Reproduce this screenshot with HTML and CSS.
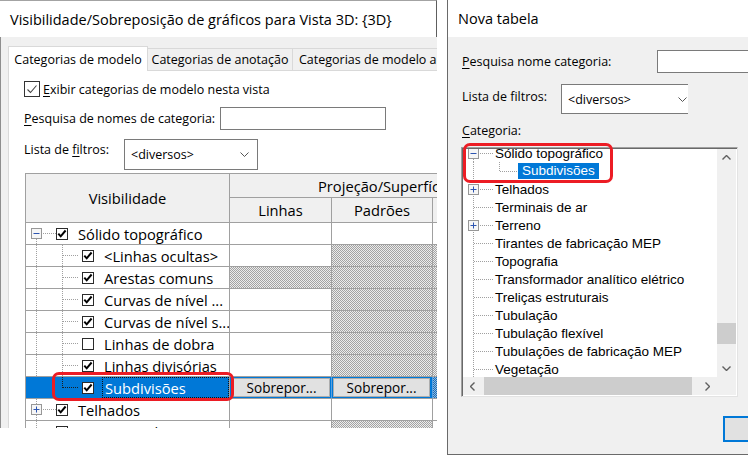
FILE: index.html
```html
<!DOCTYPE html>
<html lang="pt">
<head>
<meta charset="utf-8">
<title>Visibilidade</title>
<link rel="stylesheet" href="styles.css">
</head>
<body>
<div class="screen">
  <section class="dlg-l">
    <div class="tbar tbar-l">Visibilidade/Sobreposição de gráficos para Vista 3D: {3D}</div>
    <div class="lbody">
      <div class="tabs">
        <div class="tab tab-on">Categorias de modelo</div>
        <div class="tab tab-2">Categorias de anotação</div>
        <div class="tab tab-3">Categorias de modelo analítico</div>
      </div>
      <div class="panel">
        <div class="cbrow">
          <svg class="cb16" viewBox="0 0 16 16"><rect x=".5" y=".5" width="15" height="15"/><path d="M3.5 8.5l3 3 6-7"/></svg>
          <span><u>E</u>xibir categorias de modelo nesta vista</span>
        </div>
        <div class="frow frow-search">
          <span class="lbl lbl-search"><u>P</u>esquisa de nomes de categoria:</span>
          <span class="inp inp-l"></span>
        </div>
        <div class="frow frow-filt">
          <span class="lbl lbl-filt">Lista de <u>fi</u>ltros:</span>
          <span class="sel sel-l"><span>&lt;diversos&gt;</span><svg class="chev" viewBox="0 0 9 5"><path d="M.5.5l4 4 4-4"/></svg></span>
        </div>
        <div class="vg">
          <div class="hc hc-vis">Visibilidade</div>
          <div class="hc hc-proj">Projeção/Superfície</div>
          <div class="hc">Linhas</div>
          <div class="hc">Padrões</div>
          <div class="hc"></div>

          <div class="c tc"><span class="g g-rf"><svg class="ex" viewBox="0 0 11 11"><rect x=".5" y=".5" width="10" height="10"/><path d="M2.5 5.5h6"/></svg></span><svg class="cb" viewBox="0 0 12 12"><rect x=".5" y=".5" width="11" height="11"/><path d="M2.3 5.6l2.4 2.7 4.9-5.8"/></svg><span class="tt">Sólido topográfico</span></div>
          <div class="c"></div><div class="c"></div><div class="c"></div>

          <div class="c tc"><span class="g g-ch"></span><svg class="cb" viewBox="0 0 12 12"><rect x=".5" y=".5" width="11" height="11"/><path d="M2.3 5.6l2.4 2.7 4.9-5.8"/></svg><span class="tt">&lt;Linhas ocultas&gt;</span></div>
          <div class="c"></div><div class="c h"></div><div class="c h"></div>

          <div class="c tc"><span class="g g-ch"></span><svg class="cb" viewBox="0 0 12 12"><rect x=".5" y=".5" width="11" height="11"/><path d="M2.3 5.6l2.4 2.7 4.9-5.8"/></svg><span class="tt">Arestas comuns</span></div>
          <div class="c h"></div><div class="c h"></div><div class="c h"></div>

          <div class="c tc"><span class="g g-ch"></span><svg class="cb" viewBox="0 0 12 12"><rect x=".5" y=".5" width="11" height="11"/><path d="M2.3 5.6l2.4 2.7 4.9-5.8"/></svg><span class="tt">Curvas de nível ...</span></div>
          <div class="c"></div><div class="c h"></div><div class="c h"></div>

          <div class="c tc"><span class="g g-ch"></span><svg class="cb" viewBox="0 0 12 12"><rect x=".5" y=".5" width="11" height="11"/><path d="M2.3 5.6l2.4 2.7 4.9-5.8"/></svg><span class="tt">Curvas de nível s...</span></div>
          <div class="c"></div><div class="c h"></div><div class="c h"></div>

          <div class="c tc"><span class="g g-ch"></span><svg class="cb" viewBox="0 0 12 12"><rect x=".5" y=".5" width="11" height="11"/></svg><span class="tt">Linhas de dobra</span></div>
          <div class="c"></div><div class="c h"></div><div class="c h"></div>

          <div class="c tc"><span class="g g-ch"></span><svg class="cb" viewBox="0 0 12 12"><rect x=".5" y=".5" width="11" height="11"/><path d="M2.3 5.6l2.4 2.7 4.9-5.8"/></svg><span class="tt">Linhas divisórias</span></div>
          <div class="c"></div><div class="c h"></div><div class="c h"></div>

          <div class="c tc sel-row"><span class="g g-chl"></span><svg class="cb" viewBox="0 0 12 12"><rect x=".5" y=".5" width="11" height="11"/><path d="M2.3 5.6l2.4 2.7 4.9-5.8"/></svg><span class="focus">Subdivisões</span></div>
          <div class="c sel-row bc bc1"><span class="btn">Sobrepor...</span></div>
          <div class="c sel-row bc bc2"><span class="btn">Sobrepor...</span></div>
          <div class="c hb"></div>

          <div class="c tc"><span class="g g-r"><svg class="ex" viewBox="0 0 11 11"><rect x=".5" y=".5" width="10" height="10"/><path d="M2.5 5.5h6M5.5 2.5v6"/></svg></span><svg class="cb" viewBox="0 0 12 12"><rect x=".5" y=".5" width="11" height="11"/><path d="M2.3 5.6l2.4 2.7 4.9-5.8"/></svg><span class="tt">Telhados</span></div>
          <div class="c"></div><div class="c"></div><div class="c"></div>

          <div class="c tc"><span class="g g-r"></span><svg class="cb" viewBox="0 0 12 12"><rect x=".5" y=".5" width="11" height="11"/><path d="M2.3 5.6l2.4 2.7 4.9-5.8"/></svg><span class="tt">Terminais de ar</span></div>
          <div class="c"></div><div class="c h"></div><div class="c"></div>
        </div>
      </div>
    </div>
  </section>

  <section class="dlg-r">
    <div class="tbar tbar-r">Nova tabela</div>
    <div class="rbody">
      <div class="rrow rrow-search">
        <span class="lbl rlbl-search"><u>P</u>esquisa nome categoria:</span>
        <span class="inp inp-r"></span>
      </div>
      <div class="rrow rrow-filt">
        <span class="lbl rlbl-filt">Lista de filtros:</span>
        <span class="sel sel-r"><span>&lt;diversos&gt;</span><svg class="chev" viewBox="0 0 9 5"><path d="M.5.5l4 4 4-4"/></svg></span>
      </div>
      <div class="rcat"><u>C</u>ategoria:</div>
      <div class="lst">
        <div class="lst-view">
          <div class="rtree">
            <div class="rt"><span class="rg rg-f"><svg class="ex" viewBox="0 0 11 11"><rect x=".5" y=".5" width="10" height="10"/><path d="M2.5 5.5h6"/></svg></span><span class="rtt">Sólido topográfico</span></div>
            <div class="rt"><span class="rg rg-cl"></span><span class="rsel">Subdivisões</span></div>
            <div class="rt"><span class="rg"><svg class="ex" viewBox="0 0 11 11"><rect x=".5" y=".5" width="10" height="10"/><path d="M2.5 5.5h6M5.5 2.5v6"/></svg></span><span class="rtt">Telhados</span></div>
            <div class="rt"><span class="rg"></span><span class="rtt">Terminais de ar</span></div>
            <div class="rt"><span class="rg"><svg class="ex" viewBox="0 0 11 11"><rect x=".5" y=".5" width="10" height="10"/><path d="M2.5 5.5h6M5.5 2.5v6"/></svg></span><span class="rtt">Terreno</span></div>
            <div class="rt"><span class="rg"></span><span class="rtt">Tirantes de fabricação MEP</span></div>
            <div class="rt"><span class="rg"></span><span class="rtt">Topografia</span></div>
            <div class="rt"><span class="rg"></span><span class="rtt">Transformador analítico elétrico</span></div>
            <div class="rt"><span class="rg"></span><span class="rtt">Treliças estruturais</span></div>
            <div class="rt"><span class="rg"></span><span class="rtt">Tubulação</span></div>
            <div class="rt"><span class="rg"></span><span class="rtt">Tubulação flexível</span></div>
            <div class="rt"><span class="rg"></span><span class="rtt">Tubulações de fabricação MEP</span></div>
            <div class="rt"><span class="rg"></span><span class="rtt">Vegetação</span></div>
            <div class="rt"><span class="rg"></span><span class="rtt">Vidros</span></div>
          </div>
        </div>
        <div class="vscroll">
          <span class="sarrow"><svg class="sa" viewBox="0 0 9 5"><path d="M.5 4.5l4-4 4 4"/></svg></span>
          <span class="vtrack"><span class="vthumb"></span></span>
          <span class="sarrow"><svg class="sa" viewBox="0 0 9 5"><path d="M.5.5l4 4 4-4"/></svg></span>
        </div>
        <div class="hscroll">
          <span class="sarrow-h"><svg class="sah" viewBox="0 0 5 9"><path d="M4.5.5l-4 4 4 4"/></svg></span>
          <span class="htrack"><span class="hthumb"></span></span>
          <span class="sarrow-h"><svg class="sah" viewBox="0 0 5 9"><path d="M.5.5l4 4-4 4"/></svg></span>
        </div>
        <div class="corner"></div>
      </div>
      <div class="okbtn"></div>
    </div>
  </section>

  <div class="ann ann1"></div>
  <div class="ann ann2"></div>
</div>
</body>
</html>
```

FILE: styles.css
```css
* { box-sizing: border-box; margin: 0; padding: 0; }
html, body { width: 748px; height: 455px; overflow: hidden; background: #fff; }
body {
  font-family: "Open Sans", "Noto Sans", sans-serif;
  font-size: 12.5px;
  color: #000;
  --dv: repeating-linear-gradient(to bottom, #a0a0a0 0 1px, transparent 1px 2px);
  --dh: repeating-linear-gradient(to right, #a0a0a0 0 1px, transparent 1px 2px);
  --dvs: repeating-linear-gradient(to bottom, #1d1d1d 0 1px, transparent 1px 2px);
  --dhs: repeating-linear-gradient(to right, #1d1d1d 0 1px, transparent 1px 2px);
}
u { text-decoration: underline; text-underline-offset: 2px; text-decoration-thickness: 1px; }

.screen { position: relative; display: flex; align-items: flex-start; width: 748px; height: 455px; }

/* ---------- left dialog ---------- */
.dlg-l { width: 437px; height: 428px; flex: none; display: flex; flex-direction: column; overflow: hidden; }
.tbar { height: 37px; flex: none; background: #fff; display: flex; align-items: center; white-space: nowrap; font-size: 14.5px; }
.tbar-l { padding-left: 10px; border-top: 1px solid #a3a3a3; border-right: 1px solid #5e5e5e; }
.lbody { flex: 1; min-height: 0; background: #f0f0f0; border-left: 1px solid #8e8e8e; padding: 9px 0 0 7px; display: flex; flex-direction: column; }

.tabs { display: flex; align-items: flex-end; height: 24px; flex: none; white-space: nowrap; }
.tab { height: 22px; background: #f0f0f0; border: 1px solid #d9d9d9; border-bottom: none; display: flex; align-items: center; justify-content: center; flex: none; }
.tab-on { width: 140px; height: 25px; background: #fff; margin-bottom: -1px; position: relative; z-index: 1; }
.tab-2 { width: 145px; border-left: none; }
.tab-3 { width: 170px; border-left: none; justify-content: flex-start; padding-left: 6px; }

.panel { flex: 1; min-height: 0; background: #fff; border-left: 1px solid #d9d9d9; border-top: 1px solid #d9d9d9; padding: 10px 0 0 15px; }

.cbrow { display: flex; align-items: center; gap: 3px; height: 16px; white-space: nowrap; }
.cb16 { width: 16px; height: 16px; flex: none; }
.cb16 rect { fill: #fff; stroke: #333; }
.cb16 path { fill: none; stroke: #444; stroke-width: 1.1; }

.frow { display: flex; white-space: nowrap; }
.frow-search { margin-top: 10px; height: 23px; align-items: center; }
.lbl-search { width: 196px; }
.inp { display: block; background: #fff; border: 1px solid #7a7a7a; flex: none; }
.inp-l { width: 166px; height: 23px; }
.frow-filt { margin-top: 9px; height: 31px; align-items: flex-start; }
.lbl-filt { width: 100px; line-height: 21px; }
.sel { display: flex; align-items: center; background: #fff; border: 1px solid #7a7a7a; flex: none; }
.sel-l { width: 134px; height: 31px; padding: 0 8px 0 6px; justify-content: space-between; }
.chev { width: 9px; height: 5px; flex: none; }
.chev path { fill: none; stroke: #555; stroke-width: 1; }

/* grid */
.vg {
  margin-top: 3px; margin-left: 1px;
  display: grid;
  grid-template-columns: 204px 102px 101px 60px;
  grid-template-rows: 24px 25px repeat(10, 22px);
  width: 468px;
  font-size: 14.7px;
  border-left: 1px solid #a0a0a0; border-top: 1px solid #a0a0a0;
}
.hc { background: #f0f0f0; border-right: 1px solid #a0a0a0; border-bottom: 1px solid #a0a0a0; display: flex; align-items: center; justify-content: center; white-space: nowrap; overflow: hidden; }
.hc-vis { grid-row: span 2; }
.hc-proj { grid-column: 2 / span 3; justify-content: flex-start; padding-left: 88px; }
.c { background: #fff; border-right: 1px solid #a0a0a0; border-bottom: 1px solid #a0a0a0; overflow: hidden; }
.h { background: conic-gradient(#a3a3a3 25%, #ececec 0 50%, #a3a3a3 0 75%, #ececec 0) 0 0 / 2px 2px; }
.hb { background: conic-gradient(#0a6fc8 25%, #9fb7cf 0 50%, #0a6fc8 0 75%, #9fb7cf 0) 0 0 / 2px 2px; }

.tc { display: flex; align-items: center; white-space: nowrap; }
.g { align-self: stretch; flex: none; display: flex; align-items: center; }
.g-r { width: 30px; background: var(--dv) 10px 0 / 1px 100% no-repeat, var(--dh) 11px 10px / 19px 1px no-repeat; }
.g-rf { width: 30px; background: var(--dv) 10px 10px / 1px 11px no-repeat, var(--dh) 11px 10px / 19px 1px no-repeat; }
.g-ch { width: 52px; margin-right: 4px; background: var(--dv) 10px 0 / 1px 100% no-repeat, var(--dv) 36px 0 / 1px 100% no-repeat, var(--dh) 37px 10px / 15px 1px no-repeat; }
.g-chl { width: 52px; margin-right: 4px; background: var(--dvs) 36px 0 / 1px 11px no-repeat, var(--dhs) 37px 10px / 15px 1px no-repeat; }
.ex { width: 11px; height: 11px; margin-left: 5px; flex: none; }
.ex rect { fill: #f6f6f6; stroke: #979797; }
.ex path { fill: none; stroke: #2d55b0; stroke-width: 1; }
.cb { width: 12px; height: 12px; flex: none; }
.cb rect { fill: #fff; stroke: #2b2b2b; }
.cb path { fill: none; stroke: #000; stroke-width: 2; }
.tt { margin-left: 10px; }

.sel-row { background: #0078d7; }
.focus { margin-left: 8px; flex: 1; align-self: stretch; display: flex; align-items: center; padding-left: 2px; color: #fff; border: 1px dotted #111; }
.bc { display: flex; padding: 1px 1px 1px 3px; border-right-color: #5aa0e0; }
.bc2 { padding-left: 1px; padding-right: 2px; }
.btn { flex: 1; background: #e1e1e1; border: 1px solid #adadad; display: flex; align-items: center; justify-content: center; line-height: 17px; white-space: nowrap; font-size: 13.6px; }

/* ---------- right dialog ---------- */
.dlg-r { margin-left: 10px; flex: 1; height: 455px; border-left: 1px solid #6a6a6a; border-bottom: 1px solid #6a6a6a; display: flex; flex-direction: column; overflow: hidden; }
.tbar-r { padding-left: 10px; }
.rbody { flex: 1; background: #f0f0f0; padding-left: 14px; display: flex; flex-direction: column; white-space: nowrap; }
.rrow { display: flex; flex: none; }
.rrow-search { margin-top: 13px; height: 23px; align-items: center; }
.rlbl-search { width: 195px; flex: none; }
.inp-r { width: 120px; height: 23px; }
.rrow-filt { margin-top: 11px; height: 30px; align-items: flex-start; }
.rlbl-filt { width: 99px; flex: none; line-height: 26px; }
.sel-r { width: 127px; height: 30px; border-right: none; padding: 0 1px 0 6px; justify-content: space-between; }
.rcat { margin-top: 8px; line-height: 18px; }

.lst {
  margin-top: 7px; margin-left: -1px;
  width: 277px; height: 250px; flex: none;
  border: 1px solid; border-color: #a0a0a0 #e3e3e3 #e3e3e3 #a0a0a0;
  box-shadow: inset 1px 1px 0 #696969;
  padding: 1px 0 0 1px;
  display: grid;
  grid-template-columns: 254px 19px;
  grid-template-rows: 228px 18px;
  background: #fff;
}
.lst-view { overflow: hidden; }
.rtree { margin-top: -5px; font-family: "Liberation Sans", Arial, sans-serif; font-size: 13.5px; }
.rt { display: flex; align-items: center; height: 18px; }
.rg { width: 30px; align-self: stretch; flex: none; display: flex; align-items: center; margin-right: 2px;
  background: var(--dv) 10px 0 / 1px 100% no-repeat, var(--dh) 11px 9px / 19px 1px no-repeat; }
.rg-f { background: var(--dv) 10px 9px / 1px 9px no-repeat, var(--dh) 11px 9px / 19px 1px no-repeat; }
.rg-cl { width: 55px; margin-right: 0; background: var(--dv) 10px 0 / 1px 100% no-repeat, var(--dv) 36px 0 / 1px 10px no-repeat, var(--dh) 37px 9px / 18px 1px no-repeat; }
.rsel { background: #0078d7; color: #fff; line-height: 16px; padding: 0 4px; }

.vscroll { background: #f0f0f0; display: flex; flex-direction: column; }
.sarrow { height: 17px; flex: none; display: flex; align-items: center; justify-content: center; }
.sa { width: 9px; height: 5px; }
.sa path, .sah path { fill: none; stroke: #606060; stroke-width: 1.4; }
.vtrack { flex: 1; display: flex; flex-direction: column; }
.vthumb { display: block; margin-top: 157px; height: 21px; background: #cdcdcd; }
.hscroll { background: #f0f0f0; display: flex; }
.sarrow-h { width: 19px; flex: none; display: flex; align-items: center; justify-content: center; }
.sah { width: 5px; height: 9px; }
.htrack { flex: 1; display: flex; }
.hthumb { display: block; margin-left: 2px; width: 208px; background: #cdcdcd; }
.corner { background: #f0f0f0; }

.okbtn { margin-top: 19px; margin-left: 261px; width: 60px; height: 26px; flex: none; background: #e1e1e1; border: 2px solid #0078d7; }

/* annotations */
.ann { position: absolute; border: 3px solid #ec1c24; border-radius: 7px; pointer-events: none; }
.ann1 { left: 52px; top: 372px; width: 182px; height: 29px; }
.ann2 { left: 463px; top: 143px; width: 150px; height: 40px; }
```
